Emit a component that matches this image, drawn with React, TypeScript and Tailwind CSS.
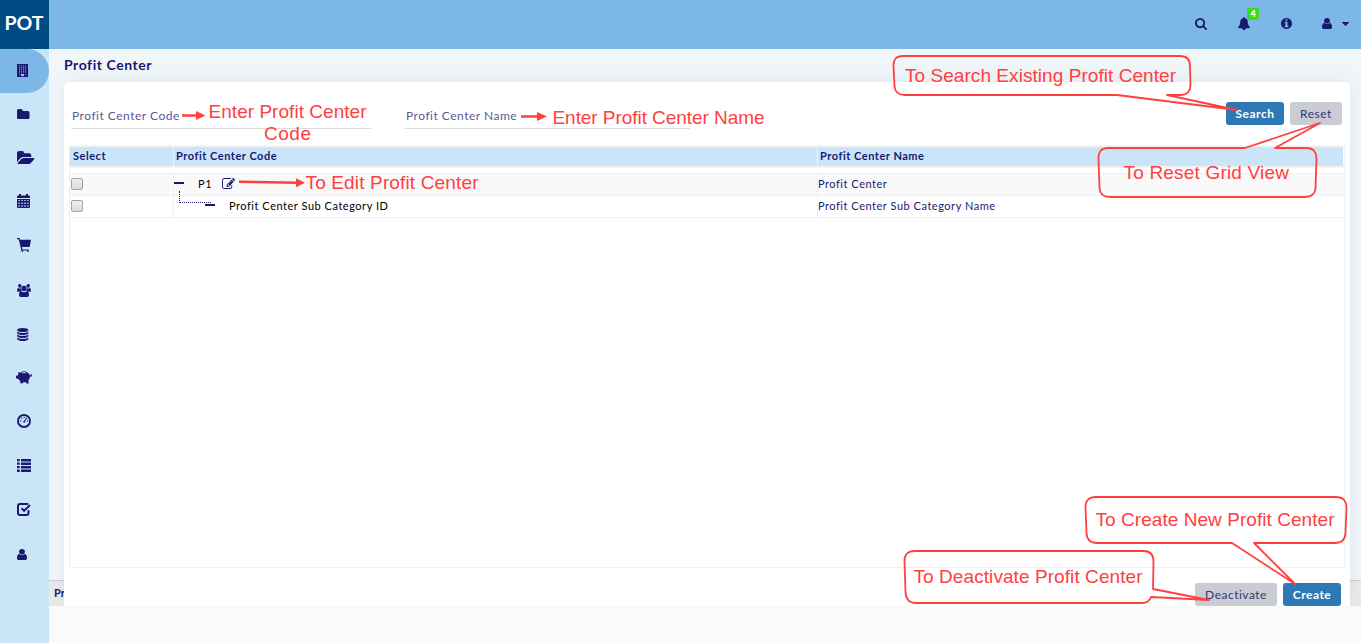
import React from "react";

const NAVY = "#191970";

type GlyphProps = { vb: string; w: number; h: number; children: React.ReactNode };

function Glyph({ vb, w, h, children }: GlyphProps) {
  return (
    <svg viewBox={vb} width={w} height={h} fill={NAVY} className="block shrink-0" preserveAspectRatio="none">
      {children}
    </svg>
  );
}

const USER =
  "M1536 1399q0 109-62.5 187t-150.5 78h-854q-88 0-150.5-78t-62.5-187q0-85 8.5-160.5t31.5-152 58.5-131 94-89 134.5-34.5q131 128 313 128t313-128q76 0 134.5 34.5t94 89 58.5 131 31.5 152 8.5 160.5zm-256-887q0 159-112.5 271.5t-271.5 112.5-271.5-112.5-112.5-271.5 112.5-271.5 271.5-112.5 271.5 112.5 112.5 271.5z";

function Building() {
  return (
    <Glyph vb="0 0 11 13" w={11} h={13}>
      <path d="M0 0h11v13H0z" />
      <path
        fill="#6d86b8"
        d="M2 1.200h1v8H2zM4 1.200h1v8H4zM6 1.200h1v8H6zM8 1.200h1v8H8z"
      />
      <path d="M1 2.200h9v.8H1zM1 4.200h9v.8H1zM1 6.200h9v.8H1zM1 8.200h9v.6H1z" opacity=".6" />
      <path fill="#9fc4ea" d="M4 10h3v2H4z" />
      <path fill="#6d86b8" d="M2 10h1v1H2zM8 10h1v1H8z" />
    </Glyph>
  );
}

function Folder() {
  return (
    <Glyph vb="64 128 1664 1408" w={12.5} h={10.5}>
      <path d="M1728 608v704q0 92-66 158t-158 66h-1216q-92 0-158-66t-66-158v-960q0-92 66-158t158-66h320q92 0 158 66t66 158v32h672q92 0 158 66t66 158z" />
    </Glyph>
  );
}

function FolderOpen() {
  return (
    <Glyph vb="0 128 1880 1408" w={17.5} h={13}>
      <path d="M1879 952q0 31-31 66l-336 396q-43 51-120.5 86.500t-143.5 35.500h-1088q-34 0-60.500-13t-26.500-43q0-31 31-66l336-396q43-51 120.500-86.500t143.500-35.500h1088q34 0 60.500 13t26.500 43zm-343-344v160h-832q-94 0-197 47.500t-164 119.500l-337 396-5 6q0-4-.5-12.500t-.5-12.500v-960q0-92 66-158t158-66h320q92 0 158 66t66 158v32h544q92 0 158 66t66 158z" />
    </Glyph>
  );
}

function Calendar() {
  return (
    <Glyph vb="0 0 13 14" w={13} h={14}>
      <path
        fillRule="evenodd"
        d="M2 0h2v1.500h5V0h2v1.500h1q1 0 1 1V4H0V2.500q0-1 1-1h1zM0 5h13v8q0 1-1 1H1q-1 0-1-1zM1.200 6.200v.9h1.800v-.9zM4.100 6.200v.9h2v-.9zM7.100 6.200v.9h2v-.9zM10.100 6.200v.9h1.700v-.9zM1.200 8.800v.9h1.800v-.9zM4.100 8.800v.9h2v-.9zM7.100 8.800v.9h2v-.9zM10.100 8.800v.9h1.700v-.9zM1.200 11.500v.9h1.800v-.9zM4.100 11.500v.9h2v-.9zM7.100 11.500v.9h2v-.9zM10.100 11.500v.9h1.700v-.9z"
      />
    </Glyph>
  );
}

function Cart() {
  return (
    <Glyph vb="0 0 14 14" w={14} h={14}>
      <path d="M0 0h2.500l.6 1.700H14l-1.200 6.500q-.2.900-1 .9H4.900l.6 2.500h6.300v.9H4.400L1.700 1.200H0z" />
      <circle cx="5.200" cy="13.100" r=".9" />
      <circle cx="10.800" cy="13.100" r=".9" />
    </Glyph>
  );
}

function Users() {
  return (
    <Glyph vb="0 0 14 13" w={14} h={13}>
      <circle cx="2.800" cy="1.900" r="1.800" />
      <circle cx="11.200" cy="1.900" r="1.800" />
      <circle cx="7" cy="4.400" r="2.700" />
      <path d="M0 6.800Q0 4 1.300 4q1.400.9 2.600.4Q3.800 6 4.800 6.900 3.300 7 2.700 7.700H1.200Q0 7.700 0 6.800zM14 6.800Q14 4 12.700 4q-1.400.9-2.600.4.100 1.600-.9 2.500 1.500.1 2.100.800h1.500q1.200 0 1.200-.900zM2 11.200Q2 7.300 4.300 7.300q2.700 1.900 5.400 0 2.300 0 2.300 3.900 0 1.800-1.600 1.800H3.600Q2 13 2 11.200z" />
    </Glyph>
  );
}

function Database() {
  return (
    <Glyph vb="0 0 12 13" w={11.5} h={13}>
      <ellipse cx="6" cy="2" rx="5.900" ry="2" />
      <path d="M.1 3.400Q2 5 6 5t5.900-1.600v1.500Q10.500 7 6 7T.1 4.900zM.1 6.400Q2 8 6 8t5.900-1.600v1.500Q10.500 10 6 10T.1 7.900zM.1 9.400Q2 11 6 11t5.900-1.600v1.500Q10.500 13 6 13T.1 10.900z" />
    </Glyph>
  );
}

function Piggy() {
  return (
    <Glyph vb="0 0 16 13" w={16} h={13}>
      <path
        fillRule="evenodd"
        d="M2.200 1L4.500 1.800Q7.500-.8 11.200 1.300q2.300 1.200 2.700 3.200.8.100.9-.6l-.5-.7.8-.5q1.600 1.800.3 2.700-.6.400-1.400.2-.2 2.300-1.600 3.700l.3 3.200H10.300l-.3-1.300H7.300L7 12.300H4.300L4.200 10Q3 9.200 2.300 8L0 7.300V4.800l1.700-.4.700-1.200zM5.800 1.900l.3.600q2-.9 4 0l.3-.600Q8-.1 5.800 1.900z"
      />
    </Glyph>
  );
}

function Gauge() {
  return (
    <Glyph vb="0 0 14 14" w={14} h={14}>
      <circle cx="7" cy="7" r="6.050" fill="none" stroke={NAVY} strokeWidth="1.900" />
      <circle cx="3.600" cy="7" r=".7" />
      <circle cx="4.800" cy="4.300" r=".7" />
      <circle cx="7.200" cy="3.400" r=".7" />
      <circle cx="10.400" cy="7" r=".7" />
      <path d="M9.300 3.500l.9.500-2.100 3.200q.5 1.300-.8 1.500-1.500 0-1.100-1.400.3-.6 1-.600z" />
    </Glyph>
  );
}

function List() {
  return (
    <Glyph vb="0 0 14 13" w={14} h={13}>
      <path d="M0 0h2.700v2.200H0zM4 0h10v2.500H4zM0 3.500h2.700v2.200H0zM4 3.500h10V6H4zM0 7h2.700v2.200H0zM4 7h10v2.500H4zM0 10.500h2.700V13H0zM4 10.500h10V13H4z" />
    </Glyph>
  );
}

function CheckSquare() {
  return (
    <Glyph vb="0 0 14 13" w={14} h={13}>
      <path
        d="M10.500 1H3Q1 1 1 3v7q0 2 2 2h6.500q2 0 2-2V8"
        fill="none"
        stroke={NAVY}
        strokeWidth="2"
        strokeLinecap="round"
      />
      <path d="M4.500 5.200l2.600 2.600L13 2" fill="none" stroke={NAVY} strokeWidth="2" />
    </Glyph>
  );
}

function User({ w = 10, h = 11 }: { w?: number; h?: number }) {
  return (
    <Glyph vb="256 128 1280 1536" w={w} h={h}>
      <path d={USER} />
    </Glyph>
  );
}

function Edit() {
  return (
    <Glyph vb="0 128 1792 1408" w={13} h={11}>
      <path d="M888 1184l116-116-152-152-116 116v56h96v96h56zm440-720q-16-16-33 1l-350 350q-17 17-1 33t33-1l350-350q17-17 1-33zm80 594v190q0 119-84.500 203.500t-203.500 84.500h-832q-119 0-203.500-84.500t-84.500-203.500v-832q0-119 84.500-203.500t203.500-84.500h832q63 0 117 25 15 7 18 23 3 17-9 29l-49 49q-14 14-32 8-23-6-45-6h-832q-66 0-113 47t-47 113v832q0 66 47 113t113 47h832q66 0 113-47t47-113v-126q0-13 9-22l64-64q15-15 35-7t20 29zm-96-738l288 288-672 672h-288v-288zm444 132l-92 92-288-288 92-92q28-28 68-28t68 28l152 152q28 28 28 68t-28 68z" />
    </Glyph>
  );
}

const NAV: { icon: React.ReactNode; pad: string }[] = [
  { icon: <Building />, pad: "pb-px pl-[17px]" },
  { icon: <Folder />, pad: "pb-[2px] pl-[17px]" },
  { icon: <FolderOpen />, pad: "pb-[3px] pl-[17px]" },
  { icon: <Calendar />, pad: "pb-[4px] pl-[17px]" },
  { icon: <Cart />, pad: "pb-[4px] pl-[17px]" },
  { icon: <Users />, pad: "pb-px pl-[17px]" },
  { icon: <Database />, pad: "pb-px pl-[17px]" },
  { icon: <Piggy />, pad: "pb-[3px] pl-[16px]" },
  { icon: <Gauge />, pad: "pb-[4px] pl-[17px]" },
  { icon: <List />, pad: "pb-[3px] pl-[17px]" },
  { icon: <CheckSquare />, pad: "pb-[3px] pl-[17px]" },
  { icon: <User />, pad: "pb-px pl-[17px]" },
];

function Header() {
  return (
    <header className="flex h-[49px] bg-[#7cb7e8]">
      <div className="flex w-[49px] items-center justify-center bg-[#004b84] pb-[4px] pr-px text-[19.5px] font-bold text-white">
        POT
      </div>
      <div className="flex flex-1 items-center justify-end pb-[2px] pr-[12px]">
        <div className="mr-[31px]">
          <Glyph vb="64 128 1664 1664" w={12} h={12}>
            <path d="M1216 832q0-185-131.500-316.500t-316.500-131.500-316.500 131.500-131.500 316.500 131.500 316.500 316.500 131.500 316.500-131.500 131.500-316.500zm512 832q0 52-38 90t-90 38q-54 0-90-38l-343-342q-179 124-399 124-143 0-273.500-55.500t-225-150-150-225-55.500-273.500 55.500-273.500 150-225 225-150 273.500-55.500 273.500 55.500 225 150 150 225 55.500 273.500q0 220-124 399l343 343q37 37 37 90z" />
          </Glyph>
        </div>
        <div className="relative mr-[31px]">
          <Glyph vb="64 0 1664 1792" w={12} h={13}>
            <path d="M1728 1408q0 52-38 90t-90 38h-448q0 106-75 181t-181 75-181-75-75-181h-448q-52 0-90-38t-38-90q50-42 91-88t85-119.500 74.500-158.500 50-206 19.500-260q0-152 117-282.500t307-158.500q-8-19-8-39 0-40 28-68t68-28 68 28 28 68q0 20-8 39 190 28 307 158.500t117 282.500q0 139 19.500 260t50 206 74.500 158.500 85 119.500 91 88z" />
          </Glyph>
          <span className="absolute -top-[9px] left-[9px] flex h-3 w-3 items-center justify-center rounded-[2px] bg-[#3bdc1c] pb-px text-[9px] font-black leading-none text-white">
            4
          </span>
        </div>
        <div className="mr-[30px]">
          <Glyph vb="128 128 1536 1536" w={11} h={11}>
            <path d="M1152 1376v-160q0-14-9-23t-23-9h-96v-512q0-14-9-23t-23-9h-320q-14 0-23 9t-9 23v160q0 14 9 23t23 9h96v320h-96q-14 0-23 9t-9 23v160q0 14 9 23t23 9h448q14 0 23-9t9-23zm-128-896v-160q0-14-9-23t-23-9h-192q-14 0-23 9t-9 23v160q0 14 9 23t23 9h192q14 0 23-9t9-23zm640 416q0 209-103 385.500t-279.500 279.500-385.500 103-385.500-103-279.500-279.500-103-385.500 103-385.500 279.500-279.500 385.500-103 385.500 103 279.500 279.500 103 385.500z" />
          </Glyph>
        </div>
        <div className="mr-[10px]">
          <User />
        </div>
        <Glyph vb="384 640 1024 576" w={7} h={4}>
          <path d="M1408 704q0 26-19 45l-448 448q-19 19-45 19t-45-19l-448-448q-19-19-19-45t19-45 45-19h896q26 0 45 19t19 45z" />
        </Glyph>
      </div>
    </header>
  );
}

function Sidebar() {
  return (
    <aside className="w-[49px] shrink-0 bg-[#cbe5f8]">
      {NAV.map((n, i) => (
        <div key={i} className={i === 0 ? "rounded-r-full bg-[#7cb7e8]" : ""}>
          <div className={"flex h-11 items-center " + n.pad}>{n.icon}</div>
        </div>
      ))}
    </aside>
  );
}

function Check() {
  return (
    <span className="block size-3 rounded-[2px] border border-[#a3a3a3] bg-linear-to-b from-[#eeeeee] to-[#dcdcdc]" />
  );
}

function Minus() {
  return <span className="block h-[2px] w-[10px] bg-[#191970]" />;
}

const COLS = "grid grid-cols-[104px_644px_1fr]";

function Table() {
  return (
    <div className="ml-[5px] mr-[5px] h-[423px] border-x border-b border-[#f0f0f0] text-[11px] tracking-[0.53px] text-[#191970]">
      <div className="border-y-2 border-[#f3f3f3] pr-px">
        <div className={COLS + " h-[19px] bg-[#cbe5f8] font-bold leading-[18px]"}>
          <div className="border-r border-[#f3f3f3] pl-[3px]">Select</div>
          <div className="border-r border-[#f3f3f3] pl-[2px]">Profit Center Code</div>
          <div className="pl-[2px]">Profit Center Name</div>
        </div>
      </div>
      <div className={COLS + " mt-[5px] h-[23px] border-y border-[#f1f1f1] bg-[#f9f9f9]"}>
        <div className="flex items-center border-r border-[#f1f1f1] pb-[2px] pl-px">
          <Check />
        </div>
        <div className="relative flex items-center border-r border-[#f1f1f1] text-black">
          <div className="pb-[3px]">
            <Minus />
          </div>
          <span className="ml-[14px] w-[24px]">P1</span>
          <div className="pb-[2px]">
            <Edit />
          </div>
          <span className="absolute left-[5px] top-[17px] h-[12px] w-[32px] border-b border-l border-dotted border-[#191970]" />
        </div>
        <div className="flex items-center">Profit Center</div>
      </div>
      <div className={COLS + " h-[22px] border-b border-[#f1f1f1]"}>
        <div className="flex items-center border-r border-[#f1f1f1] pb-[2px] pl-px">
          <Check />
        </div>
        <div className="flex items-center border-r border-[#f1f1f1] pl-[31px] text-black">
          <div className="pb-[3px]">
            <Minus />
          </div>
          <span className="ml-[14px]">Profit Center Sub Category ID</span>
        </div>
        <div className="flex items-center">Profit Center Sub Category Name</div>
      </div>
    </div>
  );
}

function Panel() {
  return (
    <section className="relative ml-[15px] mr-[11px] flex h-[524px] flex-col rounded-t-[5px] bg-white shadow-[0_0_25px_rgba(60,90,100,0.09)]">
      <div className="flex h-[63px] items-start pl-[7px] pr-[8px] pt-[20px] text-[12px] tracking-[0.5px]">
        <div className="h-[27px] w-[300px] border-b border-[#dcdcdc] pl-px leading-[28px] text-[#5a5a99]">
          Profit Center Code
        </div>
        <div className="ml-[34px] h-[27px] w-[285px] border-b border-[#dcdcdc] pl-px leading-[28px] text-[#5a5a99]">
          Profit Center Name
        </div>
        <button className="ml-auto h-[23px] w-[58px] rounded-[3px] bg-[#2e79b5] font-bold text-white">Search</button>
        <button className="ml-[6px] h-[23px] w-[52px] rounded-[3px] bg-[#c9ccd2] text-[#34347c]">Reset</button>
      </div>
      <Table />
      <div className="mt-auto flex justify-end gap-[6px] pr-[9px] text-[12px] tracking-[0.5px]">
        <button className="h-[23px] w-[82px] rounded-[3px] bg-[#c9ccd2] text-[#34347c]">Deactivate</button>
        <button className="h-[23px] w-[58px] rounded-[3px] bg-[#2e79b5] font-bold text-white">Create</button>
      </div>
    </section>
  );
}

const NOTES: { x: number; y: number; len: number; text: string }[] = [
  { x: 905, y: 82, len: 271, text: "To Search Existing Profit Center" },
  { x: 1123.5, y: 179, len: 165.5, text: "To Reset Grid View" },
  { x: 1095.5, y: 526, len: 239, text: "To Create New Profit Center" },
  { x: 913.5, y: 583, len: 229, text: "To Deactivate Profit Center" },
  { x: 208.5, y: 118, len: 158, text: "Enter Profit Center" },
  { x: 264, y: 140, len: 47, text: "Code" },
  { x: 552.5, y: 124, len: 212, text: "Enter Profit Center Name" },
  { x: 305.5, y: 189, len: 173, text: "To Edit Profit Center" },
];

function Annotations() {
  return (
    <svg className="pointer-events-none absolute left-0 top-0" width="1361" height="643" viewBox="0 0 1361 643">
      <g stroke="#ff4040" strokeWidth="1.800" strokeLinejoin="round" fill="none">
        <path d="M903 56H1180Q1190 56 1190 66L1190.500 85Q1190 95 1181 95H1167L1237 110 1117 95H905Q895 95 894.500 86L893.500 66Q893 56 903 56z" />
        <path d="M1108 148H1245L1320 123 1275 148H1306Q1317 148 1316.500 160L1315.500 188Q1315 197 1305 197H1110Q1100 197 1099.500 188L1098.500 159Q1098 148 1108 148z" />
        <path d="M1096 497H1336Q1347 497 1346.500 509L1345.500 533Q1345 543 1335 543H1254L1295 584 1232 543H1097Q1087 543 1086.500 533L1085.500 508Q1085 497 1096 497z" />
        <path d="M915 551H1144Q1153.500 551 1153.500 562L1153 589 1209 600 1151 597Q1149 603 1142 603H916Q906 603 905.500 592L904.500 562Q904 551 915 551z" />
      </g>
      <g stroke="#ff4040" strokeWidth="2.500" fill="#ff4040">
        <path d="M182 115.500H198M521 116.500H538M239 181.700L298 182.700" />
        <path stroke="none" d="M196 111L205.500 115.500 196 120zM537 112L547 116.500 537 121zM296 178.200L305 182.800 296 187.200z" />
      </g>
      <g fill="#ff4040" fontSize="19" fontFamily="Liberation Sans, Arial, sans-serif">
        {NOTES.map((n) => (
          <text key={n.text} x={n.x} y={n.y} textLength={n.len}>
            {n.text}
          </text>
        ))}
      </g>
    </svg>
  );
}

export default function App() {
  return (
    <div className="relative flex h-[643px] w-[1361px] flex-col overflow-hidden bg-[#fafafa] font-['Lato',sans-serif]">
      <Header />
      <div className="flex flex-1">
        <Sidebar />
        <main className="relative h-[557px] flex-1 overflow-hidden bg-[#f1f6f9]">
          <div className="absolute inset-x-0 bottom-0 h-[26px] border-t border-[#c9ced8] bg-[#eaeaea] pl-[5px] text-[11px] font-bold leading-[24px] text-[#191970]">
            Profit Center
          </div>
          <h1 className="h-[33px] pl-[15px] text-[14px] font-bold leading-[32px] tracking-[0.55px] text-[#191970]">
            Profit Center
          </h1>
          <Panel />
        </main>
      </div>
      <Annotations />
    </div>
  );
}
